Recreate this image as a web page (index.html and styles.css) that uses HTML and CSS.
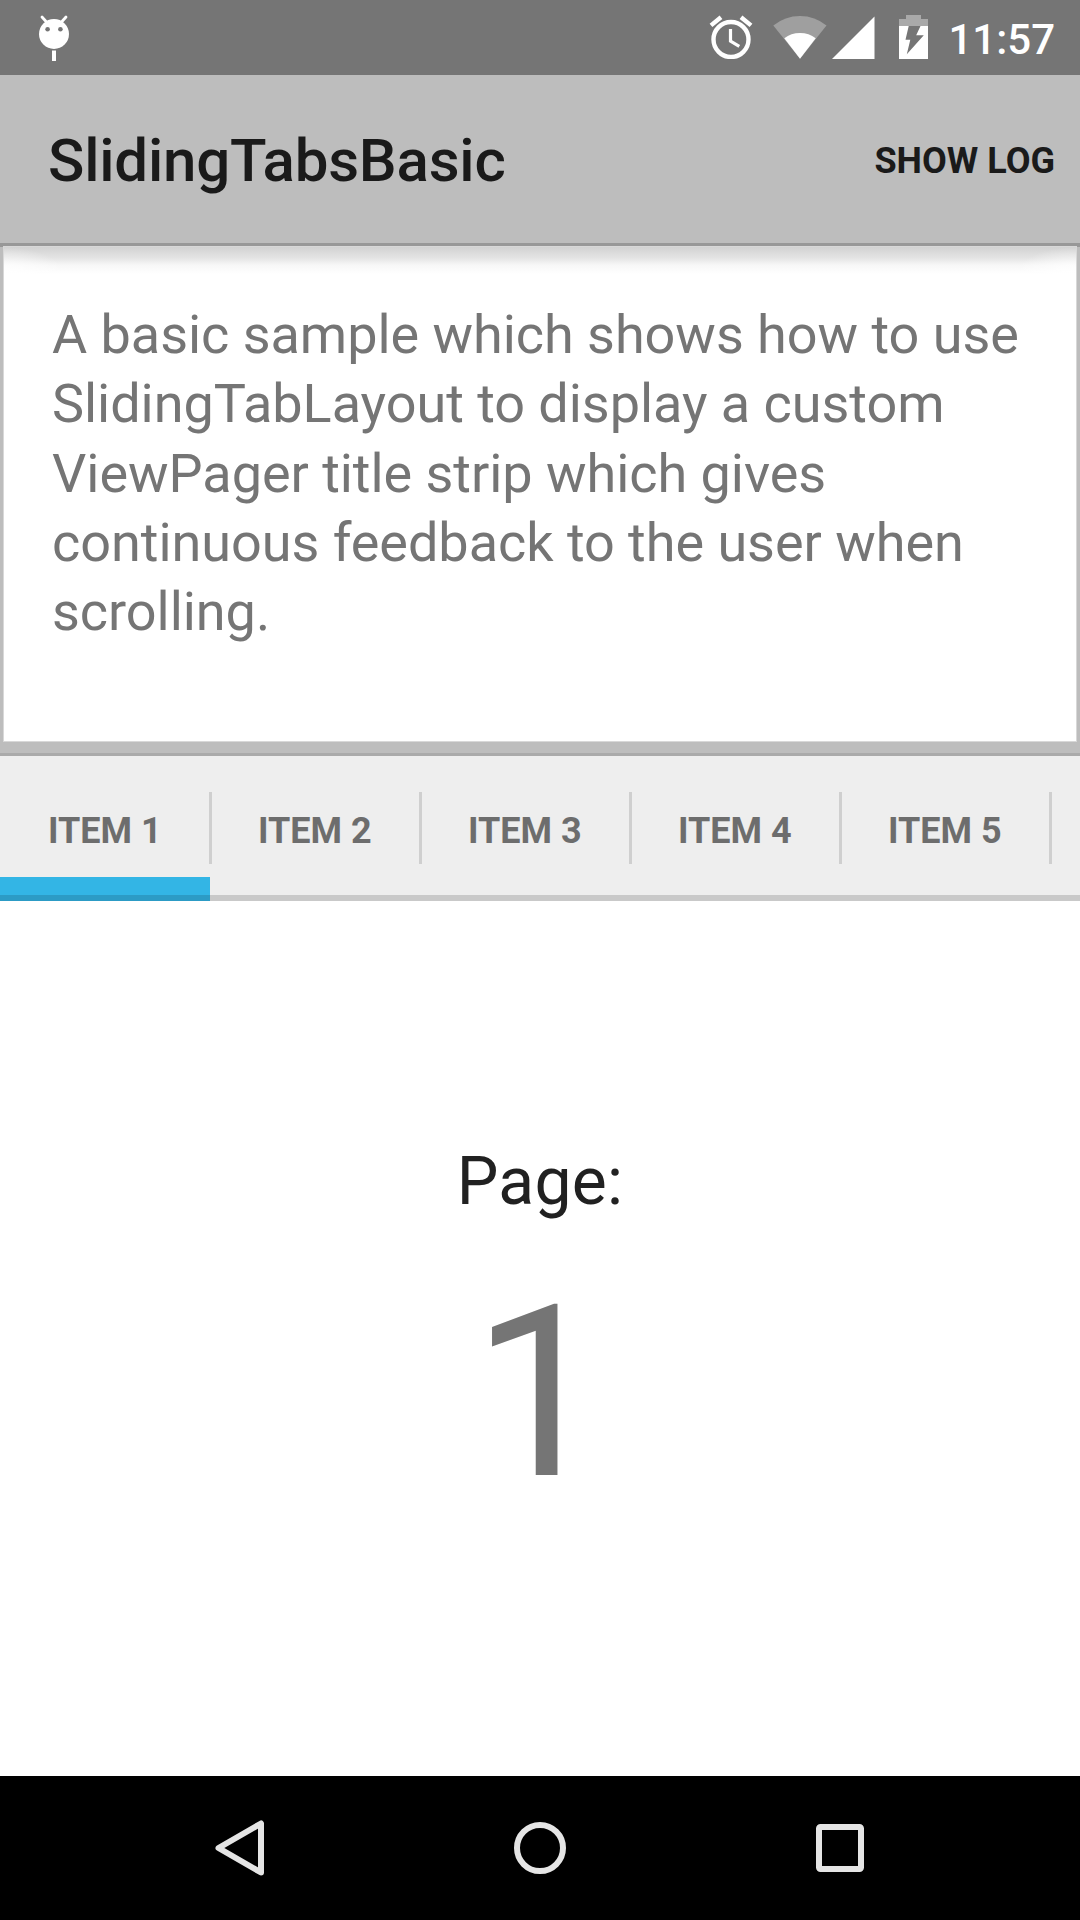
FILE: index.html
```html
<!DOCTYPE html>
<html lang="en">
<head>
<meta charset="utf-8">
<title>SlidingTabsBasic</title>
<link rel="stylesheet" href="styles.css">
</head>
<body>
<div class="screen">
  <header class="status-bar">
    <svg class="notification" width="32" height="48" viewBox="0 0 32 48">
      <path d="M4 3l4.500 5M28 3l-4.500 5" stroke="#fff" stroke-width="2.800" stroke-linecap="round"/>
      <circle cx="16" cy="20" r="15" fill="#fff"/>
      <circle cx="9.6" cy="15.3" r="2.3" fill="#757575"/>
      <circle cx="22.4" cy="15.3" r="2.3" fill="#757575"/>
      <path d="M14 36.5h4V47h-4z" fill="#fff"/>
    </svg>
    <div class="indicators">
      <svg class="alarm" width="44" height="44" viewBox="0 0 44 44">
        <g fill="none" stroke="#fff">
          <circle cx="22" cy="24.5" r="17.5" stroke-width="4.4"/>
          <path d="M21.5 14v12.2l8.8 5.2" stroke-width="3.2"/>
          <path d="M2 10.4L12 2.2M42 10.4L32 2.2" stroke-width="4.4"/>
        </g>
      </svg>
      <svg class="wifi" width="54" height="44" viewBox="0 0 54 44">
        <path d="M.3 10.500Q12 1 27 1t26.500 9.500L27 43.7z" fill="#9f9f9f"/>
        <path d="M11.3 23.2Q18 18 27 18t15.7 5.2L27 43.7z" fill="#fff"/>
      </svg>
      <svg class="signal" width="43" height="43" viewBox="0 0 43 43">
        <path d="M42.5.5V43H0z" fill="#fff"/>
      </svg>
      <svg class="battery" width="29" height="44" viewBox="0 0 29 44">
        <path d="M7 0h15v4h7v7H0V4h7z" fill="#a9a9a9"/>
        <path d="M0 11h29v33H0z" fill="#fff"/>
        <path d="M9.7 11h11.8l-4.3 9.3h7.6L7.8 39.2l3.5-14.4H6.5z" fill="#757575"/>
      </svg>
      <span class="clock">11:57</span>
    </div>
  </header>

  <div class="app-bar">
    <h1 class="app-title">SlidingTabsBasic</h1>
    <span class="action">SHOW LOG</span>
  </div>

  <section class="intro">
    <div class="intro-card">
      <p class="intro-text">A basic sample which shows how to use SlidingTabLayout to display a custom ViewPager title strip which gives continuous feedback to the user when scrolling.</p>
    </div>
  </section>

  <nav class="tabs">
    <div class="tab tab-selected">ITEM 1</div>
    <div class="tab">ITEM 2</div>
    <div class="tab">ITEM 3</div>
    <div class="tab">ITEM 4</div>
    <div class="tab">ITEM 5</div>
  </nav>

  <main class="page">
    <div class="page-label">Page:</div>
    <div class="page-number">1</div>
  </main>

  <footer class="nav-bar">
    <svg width="60" height="60" viewBox="0 0 60 60">
      <path d="M51 5.5v49L8.5 30z"/>
    </svg>
    <svg width="60" height="60" viewBox="0 0 60 60">
      <circle cx="30" cy="30" r="23"/>
    </svg>
    <svg width="60" height="60" viewBox="0 0 60 60">
      <rect x="9" y="9" width="42" height="42" rx="1.5"/>
    </svg>
  </footer>
</div>
</body>
</html>
```
FILE: styles.css
```css
* {
  box-sizing: border-box;
}

body {
  margin: 0;
  font-family: Roboto, sans-serif;
}

.screen {
  width: 1080px;
  height: 1920px;
  display: flex;
  flex-direction: column;
  overflow: hidden;
  background: #fff;
}

.status-bar {
  flex: 0 0 75px;
  display: flex;
  justify-content: space-between;
  align-items: flex-start;
  padding: 0 24px 0 38px;
  background: #757575;
}

.notification {
  margin-top: 14px;
}

.indicators {
  display: flex;
  align-items: flex-start;
  padding-top: 15px;
}

.wifi {
  margin-left: 20px;
}

.signal {
  margin: 1px 0 0 5px;
}

.battery {
  margin-left: 24px;
}

.clock {
  margin: 0 1px 0 20px;
  font-size: 42px;
  font-weight: 500;
  line-height: 49px;
  color: #fff;
}

.app-bar {
  flex: 0 0 168px;
  display: flex;
  justify-content: space-between;
  align-items: center;
  padding: 4px 25px 0 48px;
  background: #bdbdbd;
}

.app-title {
  margin: 0 0 2px;
  font-size: 60px;
  font-weight: 500;
  letter-spacing: -0.2px;
  color: #1a1a1a;
}

.action {
  font-size: 36px;
  font-weight: 700;
  color: #1a1a1a;
}

.intro {
  flex: 0 0 513px;
  padding: 4px 4px 12px;
  background: #bdbdbd;
  border-bottom: 3px solid #aaa;
  box-shadow: inset 0 4px #989898;
}

.intro-card {
  height: 100%;
  padding: 53px 40px 0 48px;
  background:
    radial-gradient(60px 27px at 0 27px, #fff, #fff0) left top / 60px 27px no-repeat,
    radial-gradient(60px 27px at 100% 27px, #fff, #fff0) right top / 60px 27px no-repeat,
    linear-gradient(#d2d2d2, #e4e4e4 11px, #f7f7f7 18px, #fff 27px);
  box-shadow: 0 0 0 1px #d8d8d8;
}

.intro-text {
  margin: 0 -4px 0 0;
  font-size: 54px;
  line-height: 69.25px;
  letter-spacing: -0.04px;
  color: #757575;
}

.tabs {
  flex: 0 0 145px;
  display: flex;
  background: linear-gradient(#c9c9c9, #c9c9c9) bottom / 100% 6px no-repeat #eee;
}

.tab {
  position: relative;
  width: 210px;
  padding: 54px 0 0 48px;
  font-size: 36px;
  line-height: 42px;
  font-weight: 700;
  color: #6d6d6d;
}

.tab::after {
  content: "";
  position: absolute;
  top: 36px;
  right: -2px;
  width: 3px;
  height: 72px;
  background: #cfcfcf;
}

.tab-selected {
  background: linear-gradient(#33b5e5 75%, #2c9bc5 75%) bottom / 100% 24px no-repeat;
}

.page {
  flex: 1;
  display: flex;
  flex-direction: column;
  align-items: center;
  justify-content: center;
}

.page-label {
  font-size: 66px;
  line-height: 77px;
  letter-spacing: 0.3px;
  color: #212121;
}

.page-number {
  margin: 33px 1px 0 0;
  font-size: 240px;
  line-height: 281px;
  color: #757575;
}

.nav-bar {
  flex: 0 0 144px;
  display: flex;
  justify-content: center;
  align-items: center;
  gap: 240px;
  background: #000;
}

.nav-bar svg {
  fill: none;
  stroke: #e5e5e5;
  stroke-width: 6;
  stroke-linejoin: round;
}
```
